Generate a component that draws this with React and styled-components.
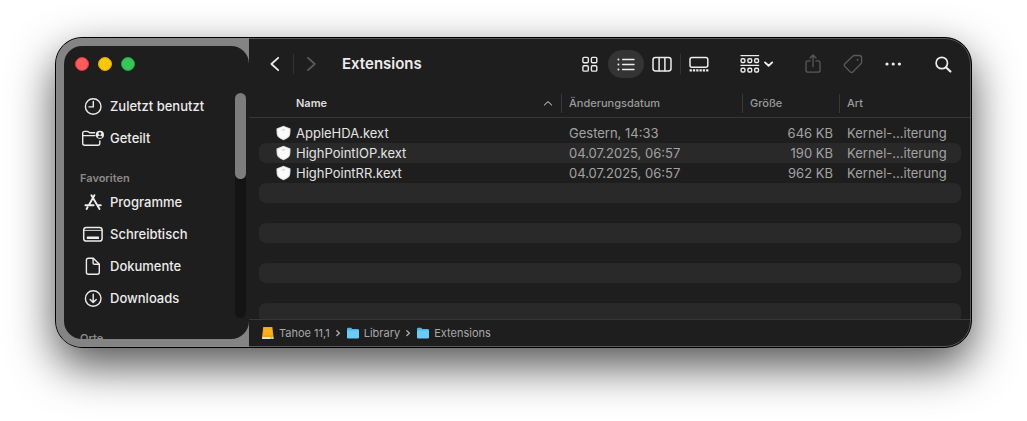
import React, { useState } from "react";
import styled, { createGlobalStyle } from "styled-components";

const GlobalStyle = createGlobalStyle`
  * {
    box-sizing: border-box;
  }

  body {
    margin: 0;
    background: #fff;
    font-family: Inter, "Liberation Sans", sans-serif;
    font-size: 13px;
    -webkit-font-smoothing: antialiased;
  }
`;

const Desktop = styled.div`
  display: flex;
  height: 100vh;
  padding: 37px 55px 73px;
  overflow: hidden;
`;

const Window = styled.div`
  position: relative;
  display: flex;
  flex: 1;
  min-width: 0;
  border: 1px solid #000;
  border-radius: 27px;
  background: #1e1e1e;
  color: #dfdfdf;
  overflow: hidden;
`;

const WindowShadow = styled.div`
  display: flex;
  flex: 1;
  min-width: 0;
  border-radius: 27px;
  box-shadow: 0 18px 45px rgba(0, 0, 0, 0.68);
`;

// thin highlight just inside the window frame
const Rim = styled.div`
  position: absolute;
  inset: 0;
  border: 1px solid rgba(140, 140, 140, 0.55);
  border-radius: 26px;
  pointer-events: none;
`;

const Tray = styled.aside`
  display: flex;
  flex: none;
  width: 193px;
  padding: 8px 0 8px 8px;
  background: #848484;
`;

const Panel = styled.div`
  display: flex;
  flex: 1;
  flex-direction: column;
  border-radius: 18px;
  background: #1e1e1e;
  overflow: hidden;
`;

const Lights = styled.div`
  display: flex;
  gap: 9px;
  padding: 11px 11px 19px;
`;

const Light = styled.button`
  width: 14px;
  height: 14px;
  padding: 0;
  border: 1px solid ${(p) => p.$edge};
  border-radius: 50%;
  background: ${(p) => p.$color};
`;

const SidebarScroll = styled.div`
  display: flex;
  flex: 1;
  min-height: 0;
`;

const Nav = styled.nav`
  flex: 1;
  overflow: hidden;
`;

const NavList = styled.ul`
  margin: 0;
  padding: 0;
  list-style: none;
`;

const NavLink = styled.a`
  display: flex;
  align-items: center;
  gap: 5px;
  height: 32px;
  padding-left: 17px;
  color: #ececec;
  font-weight: 500;
  text-decoration: none;
  white-space: nowrap;

  svg {
    flex: none;
  }
`;

const NavHeading = styled.h2`
  margin: 0;
  padding: 16px 0 0 16px;
  color: #8a8a8a;
  font-size: 11px;
  font-weight: 600;
  line-height: 16px;
`;

const ScrollTrack = styled.div`
  width: 11px;
  margin: 3px 3px 21px 0;
  border-radius: 6px;
  background: #141414;
`;

const ScrollThumb = styled.div`
  height: 38%;
  border-radius: 6px;
  background: #7d7d7d;
`;

const Main = styled.main`
  display: flex;
  flex: 1;
  flex-direction: column;
  min-width: 0;
`;

const Toolbar = styled.header`
  display: flex;
  flex: none;
  align-items: center;
  height: 52px;
  padding: 0 8px;
`;

const ToolButton = styled.button`
  display: flex;
  align-items: center;
  justify-content: center;
  width: ${(p) => p.$width || 36}px;
  height: 28px;
  padding: 0;
  border: 0;
  border-radius: 14px;
  background: ${(p) => (p.$active ? "#343434" : "transparent")};
  color: ${(p) => (p.disabled ? "#5a5a5a" : "#ececec")};

  svg {
    flex: none;
  }
`;

const Divider = styled.span`
  width: 1px;
  height: 20px;
  background: #333;
`;

const Title = styled.h1`
  flex: 1;
  min-width: 0;
  margin: 0 0 0 12px;
  color: #ececec;
  font-size: 15px;
  font-weight: 600;
  line-height: 20px;
`;

const ToolGroup = styled.div`
  display: flex;
  align-items: center;
  margin-right: ${(p) => p.$space || 0}px;
`;

const ListArea = styled.div`
  flex: 1;
  min-height: 0;
  overflow: hidden;
`;

const FileTable = styled.table`
  width: 100%;
  border-spacing: 0;
  table-layout: fixed;

  tbody::before {
    content: "";
    display: block;
    height: 5px;
  }
`;

const Col = styled.col`
  width: ${(p) => p.$width};
`;

const HeadCell = styled.th`
  padding: 4px 0;
  border-bottom: 1px solid #383838;
  color: ${(p) => (p.$sorted ? "#dfdfdf" : "#9a9a9a")};
  font-size: 11px;
  font-weight: ${(p) => (p.$sorted ? 600 : 500)};
  text-align: left;
`;

const HeadLabel = styled.div`
  display: flex;
  align-items: center;
  justify-content: space-between;
  height: 19px;
  padding: 0 8px 2px ${(p) => (p.$first ? 47 : 7)}px;
  border-left: ${(p) => (p.$first ? "0" : "1px solid #383838")};
`;

const Row = styled.tr`
  td {
    background-color: ${(p) => (p.$striped ? "#292929" : "transparent")};
    background-clip: padding-box;
  }

  td:first-child {
    border-left: 10px solid transparent;
    border-radius: 17px 0 0 17px / 7px 0 0 7px;
  }

  td:last-child {
    border-right: 10px solid transparent;
    border-radius: 0 17px 17px 0 / 0 7px 7px 0;
  }
`;

const Cell = styled.td`
  height: 20px;
  padding: 0 6px 0 8px;
  color: #a3a3a3;
  line-height: 20px;
  text-align: ${(p) => p.$align || "left"};
  white-space: nowrap;
`;

const NameCell = styled(Cell)`
  padding-left: 17px;
  color: #e4e4e4;
`;

const FileName = styled.div`
  display: flex;
  align-items: center;
  gap: 5px;
`;

const PathBar = styled.footer`
  display: flex;
  flex: none;
  align-items: center;
  height: 28px;
  padding: 0 12px 2px;
  border-top: 1px solid #383838;
  color: #a8a8a8;
  font-size: 11px;
`;

const PathItem = styled.a`
  display: flex;
  align-items: center;
  gap: 4px;
  color: inherit;
  text-decoration: none;
`;

const PathArrow = styled.span`
  display: flex;
  justify-content: center;
  width: 16px;
`;

const Icon = ({ size = 24, width = size, height = size, box, stroke = 1.4, children }) => (
    <svg
        width={width}
        height={height}
        viewBox={box || `0 0 ${width} ${height}`}
        fill="none"
        stroke="currentColor"
        strokeWidth={stroke}
        strokeLinecap="round"
        strokeLinejoin="round"
        aria-hidden="true"
    >
        {children}
    </svg>
);

const ClockIcon = () => (
    <Icon>
        <circle cx="12.2" cy="12.5" r="7.8" />
        <path d="M12.3 7.4V12.9H8" />
    </Icon>
);

const SharedFolderIcon = () => (
    <Icon>
        <path d="M1.7 17V7.2Q1.7 5.4 3.7 5.4H6Q7 5.4 7.7 6L8.6 6.8H13.6M1.7 9.6H14M18.8 15V17.2Q18.8 19.2 16.8 19.2H3.7Q1.7 19.2 1.7 17.2" />
        <circle cx="18.9" cy="8.8" r="4.1" fill="currentColor" stroke="none" />
        <circle cx="18.9" cy="7.6" r="1.4" fill="#1e1e1e" stroke="none" />
        <path d="M16.6 11.3Q16.9 9.6 18.9 9.6Q20.9 9.6 21.2 11.3Q18.9 12.6 16.6 11.3Z" fill="#1e1e1e" stroke="none" />
    </Icon>
);

const AppsIcon = () => (
    <Icon stroke={1.9}>
        <path d="M10.4 5.2L18.5 19M13.4 5.2L8.4 14.2M6.6 17.3L5.6 19M4.4 15.2H12.6M16.8 15.2H19.8" />
    </Icon>
);

const DesktopIcon = () => (
    <Icon stroke={1.5}>
        <rect x="2.7" y="5.4" width="18.4" height="13.6" rx="2.6" />
        <path d="M3 8.4H21" strokeWidth="0.9" />
        <rect x="5.8" y="14.4" width="12.2" height="2.6" rx="0.6" fill="currentColor" stroke="none" />
    </Icon>
);

const DocumentIcon = () => (
    <Icon>
        <path d="M7.4 4.2H12.3L18.3 10.2V18.2Q18.3 20.2 16.3 20.2H7.4Q5.4 20.2 5.4 18.2V6.2Q5.4 4.2 7.4 4.2Z" />
        <path d="M12.1 4.4V8.9Q12.1 10.3 13.5 10.3H18" />
    </Icon>
);

const DownloadIcon = () => (
    <Icon>
        <circle cx="12.2" cy="12.5" r="7.8" />
        <path d="M12.2 8.2V16.4M9.2 13.5L12.2 16.5L15.2 13.5" />
    </Icon>
);

const KextIcon = () => (
    <svg width="15" height="16" viewBox="0 0 15 16" aria-hidden="true">
        <path d="M7.5 0.8L14.5 3.4Q14.8 9.8 13 12Q11 14 7.5 15.2Q4 14 2 12Q0.2 9.8 0.5 3.4Z" fill="#dcdcdc" />
        <path d="M7.5 1.8L13.5 4Q13.6 9.6 12.2 11.5Q10.5 13.2 7.5 14.3Q4.5 13.2 2.8 11.5Q1.4 9.6 1.5 4Z" fill="#fafafa" />
        <path d="M5.2 4.4L7.5 3.6L9.8 4.4L7.5 6.2Z" fill="#dedede" />
    </svg>
);

const DriveIcon = () => (
    <svg width="14" height="14" viewBox="0 0 14 14" aria-hidden="true">
        <path d="M2.2 1H11.4L12.6 11.2H1Z" fill="#f0a010" />
        <path d="M2.8 1.4H10.8L11.5 9.6H2.1Z" fill="#f8b01c" />
        <rect x="1" y="11" width="11.6" height="2" rx="0.6" fill="#e6e2da" />
        <rect x="9.4" y="11.6" width="2" height="1" fill="#3fc04c" />
    </svg>
);

const FolderIcon = () => (
    <svg width="14" height="14" viewBox="0 0 14 14" aria-hidden="true">
        <path d="M1 3Q1 1.8 2.2 1.8H5L6.3 3H11.8Q13 3 13 4.2V11H1Z" fill="#4fb4e6" />
        <path d="M1 4.5H13V11.2Q13 12.4 11.8 12.4H2.2Q1 12.4 1 11.2Z" fill="#6ccbf5" />
    </svg>
);

const ArrowIcon = () => (
    <Icon width={6} height={8} stroke={1.4}>
        <path d="M1.8 1.8L4.4 4.2L1.8 6.6" />
    </Icon>
);

const BackIcon = () => (
    <Icon width={16} height={20} stroke={1.8}>
        <path d="M11.2 3.8L4.4 10L11.2 16.2" />
    </Icon>
);

const ForwardIcon = () => (
    <Icon width={16} height={20} stroke={1.8}>
        <path d="M4 3.8L10.8 10L4 16.2" />
    </Icon>
);

const GridIcon = () => (
    <Icon width={18} height={18} stroke={1.4}>
        <rect x="1.9" y="2.4" width="5.4" height="5.4" rx="1.2" />
        <rect x="10.4" y="2.4" width="5.4" height="5.4" rx="1.2" />
        <rect x="1.9" y="10.7" width="5.4" height="5.4" rx="1.2" />
        <rect x="10.4" y="10.7" width="5.4" height="5.4" rx="1.2" />
    </Icon>
);

const ListIcon = () => (
    <Icon width={20} height={18} stroke={1.4}>
        <path d="M6.6 4.5H18M6.6 9.5H18M6.6 14.5H18" />
        <path d="M2.4 4.5H2.5M2.4 9.5H2.5M2.4 14.5H2.5" strokeWidth="1.9" />
    </Icon>
);

const ColumnsIcon = () => (
    <Icon width={20} height={18} stroke={1.5}>
        <rect x="1" y="2.4" width="18" height="13.6" rx="2.4" />
        <path d="M7.1 2.7V15.8M12.9 2.7V15.8" />
    </Icon>
);

const GalleryIcon = () => (
    <Icon width={20} height={18} stroke={1.5}>
        <rect x="1" y="2.6" width="17.8" height="9.6" rx="2" />
        <path d="M0.6 15.4H19.4" strokeWidth="2.2" strokeDasharray="2.3 1" strokeLinecap="butt" />
    </Icon>
);

const GroupIcon = () => (
    <Icon width={34} height={20} stroke={1.4}>
        <path d="M1 1.6H18.6M1 11.4H18.6" />
        {[3, 9.8, 16.6].map((x) => (
            <React.Fragment key={x}>
                <rect x={x - 1.9} y="4.7" width="3.8" height="3.8" rx="1.2" />
                <rect x={x - 1.9} y="14.2" width="3.8" height="3.8" rx="1.2" />
            </React.Fragment>
        ))}
        <path d="M25 8.4L28.6 11.8L32.2 8.4" strokeWidth="1.9" />
    </Icon>
);

const ShareIcon = () => (
    <Icon width={18} height={20} stroke={1.3}>
        <path d="M6 6.9H4Q2 6.9 2 8.9V16.2Q2 18.2 4 18.2H14Q16 18.2 16 16.2V8.9Q16 6.9 14 6.9H12" />
        <path d="M9 12.6V1.2M6 4L9 1L12 4" />
    </Icon>
);

const TagIcon = () => (
    <Icon width={20} height={20} stroke={1.3}>
        <path d="M11.6 1.5H16.2Q18.6 1.5 18.6 3.9V8.1Q18.6 9.1 17.9 9.8L9.8 18Q8.6 19.2 7.4 18L1.7 12.4Q0.6 11.2 1.7 10L9.7 2.3Q10.6 1.5 11.6 1.5Z" />
        <circle cx="14.6" cy="5.7" r="1" fill="currentColor" stroke="none" />
    </Icon>
);

const MoreIcon = () => (
    <Icon width={18} height={6}>
        {[3, 9.2, 15.4].map((x) => (
            <circle key={x} cx={x} cy="3" r="1.6" fill="currentColor" stroke="none" />
        ))}
    </Icon>
);

const SearchIcon = () => (
    <Icon width={18} height={18} stroke={1.7}>
        <circle cx="7.8" cy="8" r="5.7" />
        <path d="M12.2 12.4L16.4 16.6" strokeWidth="2.1" />
    </Icon>
);

const SortIcon = () => (
    <Icon width={10} height={6} stroke={1}>
        <path d="M1.4 5L5 1.6L8.6 5" />
    </Icon>
);

const recents = [
    { label: "Zuletzt benutzt", icon: ClockIcon },
    { label: "Geteilt", icon: SharedFolderIcon },
];

const favorites = [
    { label: "Programme", icon: AppsIcon },
    { label: "Schreibtisch", icon: DesktopIcon },
    { label: "Dokumente", icon: DocumentIcon },
    { label: "Downloads", icon: DownloadIcon },
];

const views = [
    { id: "grid", label: "Symbole", icon: GridIcon },
    { id: "list", label: "Liste", icon: ListIcon },
    { id: "columns", label: "Spalten", icon: ColumnsIcon },
    { id: "gallery", label: "Galerie", icon: GalleryIcon },
];

const files = [
    { name: "AppleHDA.kext", date: "Gestern, 14:33", size: "646 KB", kind: "Kernel-...iterung" },
    { name: "HighPointIOP.kext", date: "04.07.2025, 06:57", size: "190 KB", kind: "Kernel-...iterung" },
    { name: "HighPointRR.kext", date: "04.07.2025, 06:57", size: "962 KB", kind: "Kernel-...iterung" },
];

const path = [
    { label: "Tahoe 11,1", icon: DriveIcon },
    { label: "Library", icon: FolderIcon },
    { label: "Extensions", icon: FolderIcon },
];

// empty striped rows that fill the list below the files
const emptyRows = [3, 4, 5, 6, 7, 8, 9];

const SidebarItems = ({ items }) => (
    <NavList>
        {items.map(({ label, icon: ItemIcon }) => (
            <li key={label}>
                <NavLink href="#">
                    <ItemIcon />
                    {label}
                </NavLink>
            </li>
        ))}
    </NavList>
);

const Sidebar = () => (
    <Tray>
        <Panel>
            <Lights>
                <Light type="button" aria-label="Schließen" $color="#ff5a5c" $edge="#e2393f" />
                <Light type="button" aria-label="Minimieren" $color="#fdc800" $edge="#dfa800" />
                <Light type="button" aria-label="Zoomen" $color="#34c759" $edge="#1fa83e" />
            </Lights>
            <SidebarScroll>
                <Nav>
                    <SidebarItems items={recents} />
                    <NavHeading>Favoriten</NavHeading>
                    <SidebarItems items={favorites} />
                    <NavHeading>Orte</NavHeading>
                </Nav>
                <ScrollTrack>
                    <ScrollThumb />
                </ScrollTrack>
            </SidebarScroll>
        </Panel>
    </Tray>
);

const FileList = () => (
    <ListArea>
        <FileTable>
            <colgroup>
                <Col $width="auto" />
                <Col $width="181px" />
                <Col $width="97px" />
                <Col $width="132px" />
            </colgroup>
            <thead>
                <tr>
                    <HeadCell $sorted>
                        <HeadLabel $first>
                            Name
                            <SortIcon />
                        </HeadLabel>
                    </HeadCell>
                    <HeadCell><HeadLabel>Änderungsdatum</HeadLabel></HeadCell>
                    <HeadCell><HeadLabel>Größe</HeadLabel></HeadCell>
                    <HeadCell><HeadLabel>Art</HeadLabel></HeadCell>
                </tr>
            </thead>
            <tbody>
                {files.map((file, i) => (
                    <Row key={file.name} $striped={i % 2 === 1}>
                        <NameCell>
                            <FileName>
                                <KextIcon />
                                {file.name}
                            </FileName>
                        </NameCell>
                        <Cell>{file.date}</Cell>
                        <Cell $align="right">{file.size}</Cell>
                        <Cell>{file.kind}</Cell>
                    </Row>
                ))}
                {emptyRows.map((i) => (
                    <Row key={i} $striped={i % 2 === 1}>
                        <NameCell />
                        <Cell />
                        <Cell />
                        <Cell />
                    </Row>
                ))}
            </tbody>
        </FileTable>
    </ListArea>
);

const App = () => {
    const [view, setView] = useState("list");

    return (
        <>
            <GlobalStyle />
            <Desktop>
                <WindowShadow>
                    <Window>
                        <Sidebar />
                        <Main>
                            <Toolbar>
                                <ToolButton type="button" aria-label="Zurück"><BackIcon /></ToolButton>
                                <Divider />
                                <ToolButton type="button" aria-label="Vorwärts" disabled><ForwardIcon /></ToolButton>
                                <Title>Extensions</Title>
                                <ToolGroup $space={19}>
                                    {views.map(({ id, label, icon: ViewIcon }) => (
                                        <React.Fragment key={id}>
                                            {id === "gallery" && <Divider />}
                                            <ToolButton
                                                type="button"
                                                aria-label={label}
                                                $active={view === id}
                                                onClick={() => setView(id)}
                                            >
                                                <ViewIcon />
                                            </ToolButton>
                                        </React.Fragment>
                                    ))}
                                </ToolGroup>
                                <ToolGroup $space={15}>
                                    <ToolButton type="button" aria-label="Gruppieren" $width={42}><GroupIcon /></ToolButton>
                                </ToolGroup>
                                <ToolGroup $space={10}>
                                    <ToolButton type="button" aria-label="Teilen" $width={40} disabled><ShareIcon /></ToolButton>
                                    <ToolButton type="button" aria-label="Tags" $width={40} disabled><TagIcon /></ToolButton>
                                    <ToolButton type="button" aria-label="Mehr" $width={40}><MoreIcon /></ToolButton>
                                </ToolGroup>
                                <ToolButton type="button" aria-label="Suchen" $width={40}><SearchIcon /></ToolButton>
                            </Toolbar>
                            <FileList />
                            <PathBar>
                                {path.map(({ label, icon: PathIcon }, i) => (
                                    <React.Fragment key={label}>
                                        {i > 0 && <PathArrow><ArrowIcon /></PathArrow>}
                                        <PathItem href="#">
                                            <PathIcon />
                                            {label}
                                        </PathItem>
                                    </React.Fragment>
                                ))}
                            </PathBar>
                        </Main>
                        <Rim />
                    </Window>
                </WindowShadow>
            </Desktop>
        </>
    );
};

export default App;
